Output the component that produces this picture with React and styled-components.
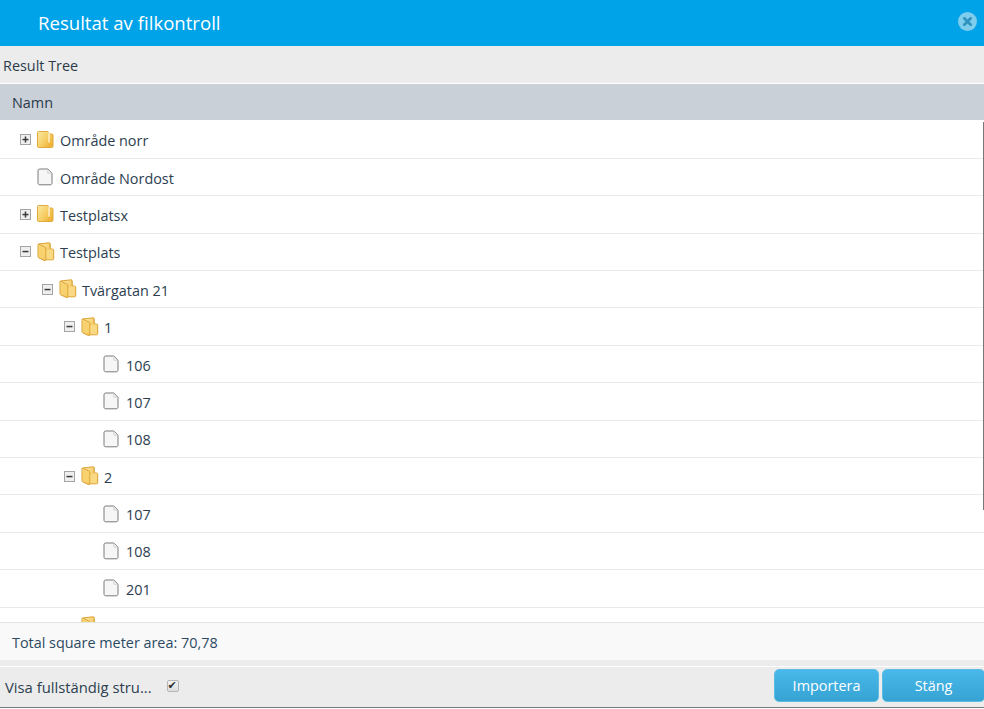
import React from "react";
import styled, { createGlobalStyle } from "styled-components";

const treeRows = [
  { level: 0, kind: "closed", toggle: "plus", label: "Område norr" },
  { level: 0, kind: "file", label: "Område Nordost" },
  { level: 0, kind: "closed", toggle: "plus", label: "Testplatsx" },
  { level: 0, kind: "open", toggle: "minus", label: "Testplats" },
  { level: 1, kind: "open", toggle: "minus", label: "Tvärgatan 21" },
  { level: 2, kind: "open", toggle: "minus", label: "1" },
  { level: 3, kind: "file", label: "106" },
  { level: 3, kind: "file", label: "107" },
  { level: 3, kind: "file", label: "108" },
  { level: 2, kind: "open", toggle: "minus", label: "2" },
  { level: 3, kind: "file", label: "107" },
  { level: 3, kind: "file", label: "108" },
  { level: 3, kind: "file", label: "201" },
  // only the top of this folder is visible above the summary bar
  { level: 2, kind: "open" },
];

const ToggleIcon = ({ type }) => (
  <svg width="11" height="11" viewBox="0 0 11 11">
    <rect x="0.5" y="0.5" width="10" height="10" fill="#efefef" stroke="#a4a4a4" />
    <rect x="2.5" y="4.8" width="6" height="1.5" fill="#3a3a3a" />
    {type === "plus" && <rect x="4.75" y="2.5" width="1.5" height="6" fill="#3a3a3a" />}
  </svg>
);

const ClosedFolder = () => (
  <svg width="17" height="18" viewBox="0 0 17 18">
    <defs>
      <linearGradient id="closedFill" x1="0" y1="0" x2="1" y2="0.7">
        <stop offset="0" stopColor="#fbe9a4" />
        <stop offset="0.55" stopColor="#f6cf68" />
        <stop offset="1" stopColor="#efb238" />
      </linearGradient>
    </defs>
    <path d="M0.5 1.5C0.5 0.8 1 0.5 1.5 0.5H10.5C11.2 0.5 11.5 0.9 11.5 1.5V3H14.8C15.6 3 16 3.4 16 4.2V15C16 15.9 15.6 16.5 14.8 16.5H1.5C0.9 16.5 0.5 16 0.5 15.2Z" fill="url(#closedFill)" stroke="#e0ab3a" />
    <path d="M12 1.5V12" stroke="#fff6d8" strokeWidth="1.3" />
    <path d="M12 11L14 13.5V15.8H10Z" fill="#f0b53c" />
  </svg>
);

const OpenFolder = () => (
  <svg width="18" height="20" viewBox="0 0 18 20">
    <defs>
      <linearGradient id="openFill" x1="0" y1="0" x2="1" y2="1">
        <stop offset="0" stopColor="#fdeaa6" />
        <stop offset="1" stopColor="#efb338" />
      </linearGradient>
    </defs>
    <path d="M1.5 2L12 0.8C12.8 0.8 13.2 1.2 13.2 2V7H15.5C16.3 7 16.7 7.5 16.7 8.3V16.5C16.7 17.3 16.2 17.8 15.5 17.8H8.6L8 18.8L2 16C1.3 15.7 1 15.2 1 14.5V2.6Z" fill="url(#openFill)" stroke="#dca232" />
    <path d="M1.5 2L8 5.2C8.6 5.5 8.9 6 8.9 6.8V18.2" fill="none" stroke="#dca232" />
    <path d="M9.4 8.5L13 7.4H16V17.2H9.4Z" fill="#f9d983" />
    <path d="M2 3.2L7.8 6V16.8L2.2 14.4Z" fill="#f8d26e" />
    <path d="M13 2V7" stroke="#e3b04a" />
  </svg>
);

const FileIcon = () => (
  <svg width="16" height="18" viewBox="0 0 16 18">
    <path d="M1 2.8C1 1.6 1.7 1 2.8 1H10.8L15 5.2V14.8C15 16.2 14.3 16.8 13.1 16.8H2.9C1.7 16.8 1 16.2 1 14.8Z" fill="#f6f6f6" stroke="#7a7a7a" />
    <path d="M10.8 1.5V5.2H14.5" fill="none" stroke="#d2d2d2" />
  </svg>
);

const rowIcons = { closed: ClosedFolder, open: OpenFolder, file: FileIcon };

const TreeRow = ({ level, kind, toggle, label }) => {
  const Icon = rowIcons[kind];
  return (
    <Row>
      <Indent $level={level} />
      <ToggleSlot>{toggle && <ToggleIcon type={toggle} />}</ToggleSlot>
      <IconSlot>
        <Icon />
      </IconSlot>
      {label && <RowLabel>{label}</RowLabel>}
    </Row>
  );
};

const App = () => (
  <>
    <GlobalStyle />
    <Dialog>
      <TitleBar>
        <Title>Resultat av filkontroll</Title>
        <CloseIcon viewBox="0 0 18 18">
          <circle cx="9" cy="9" r="9" fill="#7fcdec" />
          <path d="M6 6L12 12M12 6L6 12" stroke="#2f93c0" strokeWidth="2.6" strokeLinecap="round" />
        </CloseIcon>
      </TitleBar>
      <TreeCaption>Result Tree</TreeCaption>
      <ColumnHeader>Namn</ColumnHeader>
      <TreeBody>
        <ScrollLine />
        {treeRows.map((row, i) => (
          <TreeRow key={i} {...row} />
        ))}
      </TreeBody>
      <Summary>Total square meter area: 70,78</Summary>
      <Spacer />
      <ActionBar>
        <StructureLabel>Visa fullständig stru...</StructureLabel>
        <StructureCheck type="checkbox" defaultChecked />
        <Buttons>
          <ActionButton $width={105}>Importera</ActionButton>
          <ActionButton $width={103}>Stäng</ActionButton>
        </Buttons>
      </ActionBar>
    </Dialog>
  </>
);

const GlobalStyle = createGlobalStyle`
  html, body {
    margin: 0;
    padding: 0;
    background: #fff;
  }
  body {
    font-family: "Open Sans", "Liberation Sans", sans-serif;
    font-size: 14px;
  }
`;
const Dialog = styled.div`
  display: flex;
  flex-direction: column;
  width: 984px;
  height: 708px;
  overflow: hidden;
  border-bottom: 1px solid #777;
  box-sizing: border-box;
`;
const TitleBar = styled.div`
  display: flex;
  align-items: center;
  justify-content: space-between;
  flex: 0 0 46px;
  padding: 0 7px 2px 38px;
  box-sizing: border-box;
  background-color: #00a2e8;
`;
const Title = styled.div`
  font-size: 18.6px;
  color: #fff;
`;
const CloseIcon = styled.svg`
  width: 19px;
  height: 19px;
  margin-bottom: 2px;
`;
const TreeCaption = styled.div`
  display: flex;
  align-items: center;
  flex: 0 0 36px;
  padding: 1px 0 0 3px;
  font-size: 14.4px;
  color: #2b3a4a;
  background-color: #ececec;
  border-bottom: 1px solid #fff;
`;
const ColumnHeader = styled.div`
  display: flex;
  align-items: center;
  flex: 0 0 35px;
  padding: 1px 0 0 12px;
  font-size: 14.4px;
  color: #2b3a4a;
  background-color: #c9d0d8;
`;
const TreeBody = styled.div`
  position: relative;
  flex: 0 0 502px;
  padding-top: 1.5px;
  box-sizing: border-box;
  overflow: hidden;
  background-color: #fff;
`;
const ScrollLine = styled.div`
  position: absolute;
  top: 2px;
  right: 0;
  width: 1px;
  height: 388px;
  background-color: #777;
`;
const Row = styled.div`
  display: flex;
  align-items: center;
  height: 37.4px;
  padding-left: 20px;
  box-sizing: border-box;
  border-bottom: 1px solid #eaeaea;
`;
const Indent = styled.span`
  flex: none;
  width: ${(props) => props.$level * 22}px;
`;
const ToggleSlot = styled.span`
  display: flex;
  flex: 0 0 16.5px;
`;
const IconSlot = styled.span`
  display: flex;
  flex: 0 0 23.5px;
`;
const RowLabel = styled.span`
  padding-top: 2px;
  font-size: 14.4px;
  color: #2c3e50;
`;
const Summary = styled.div`
  display: flex;
  align-items: center;
  flex: 0 0 36px;
  padding: 1px 0 0 12px;
  font-size: 14.4px;
  color: #2c4a63;
  background-color: #f9f9f9;
  border-top: 1px solid #e4e4e4;
`;
const Spacer = styled.div`
  flex: 0 0 6px;
  background-color: #ececec;
  border-bottom: 1px solid #fff;
`;
const ActionBar = styled.div`
  display: flex;
  align-items: center;
  flex: 1;
  padding-left: 5px;
  background-color: #ececec;
`;
const StructureLabel = styled.span`
  font-size: 14.8px;
  color: #2c3e50;
`;
const StructureCheck = styled.input`
  appearance: none;
  position: relative;
  width: 12px;
  height: 12px;
  margin: 0 0 3px 15px;
  background: linear-gradient(#f4f4f4, #dcdcdc);
  border: 1px solid #b5b5b5;
  border-radius: 2px;
  box-sizing: border-box;

  &::after {
    content: "✔";
    position: absolute;
    top: -1px;
    left: 0;
    font-family: "DejaVu Sans", sans-serif;
    font-size: 11px;
    line-height: 12px;
    color: #333;
  }
`;
const Buttons = styled.div`
  display: flex;
  gap: 3px;
  margin: 0 -1px 3px auto;
`;
const ActionButton = styled.button`
  width: ${(props) => props.$width}px;
  height: 33px;
  padding: 0;
  font-family: inherit;
  font-size: 14.4px;
  color: #fff;
  background: linear-gradient(#48b9ea, #36a3d3);
  border: 1px solid #5cbce4;
  border-radius: 5px;
`;

export default App;
